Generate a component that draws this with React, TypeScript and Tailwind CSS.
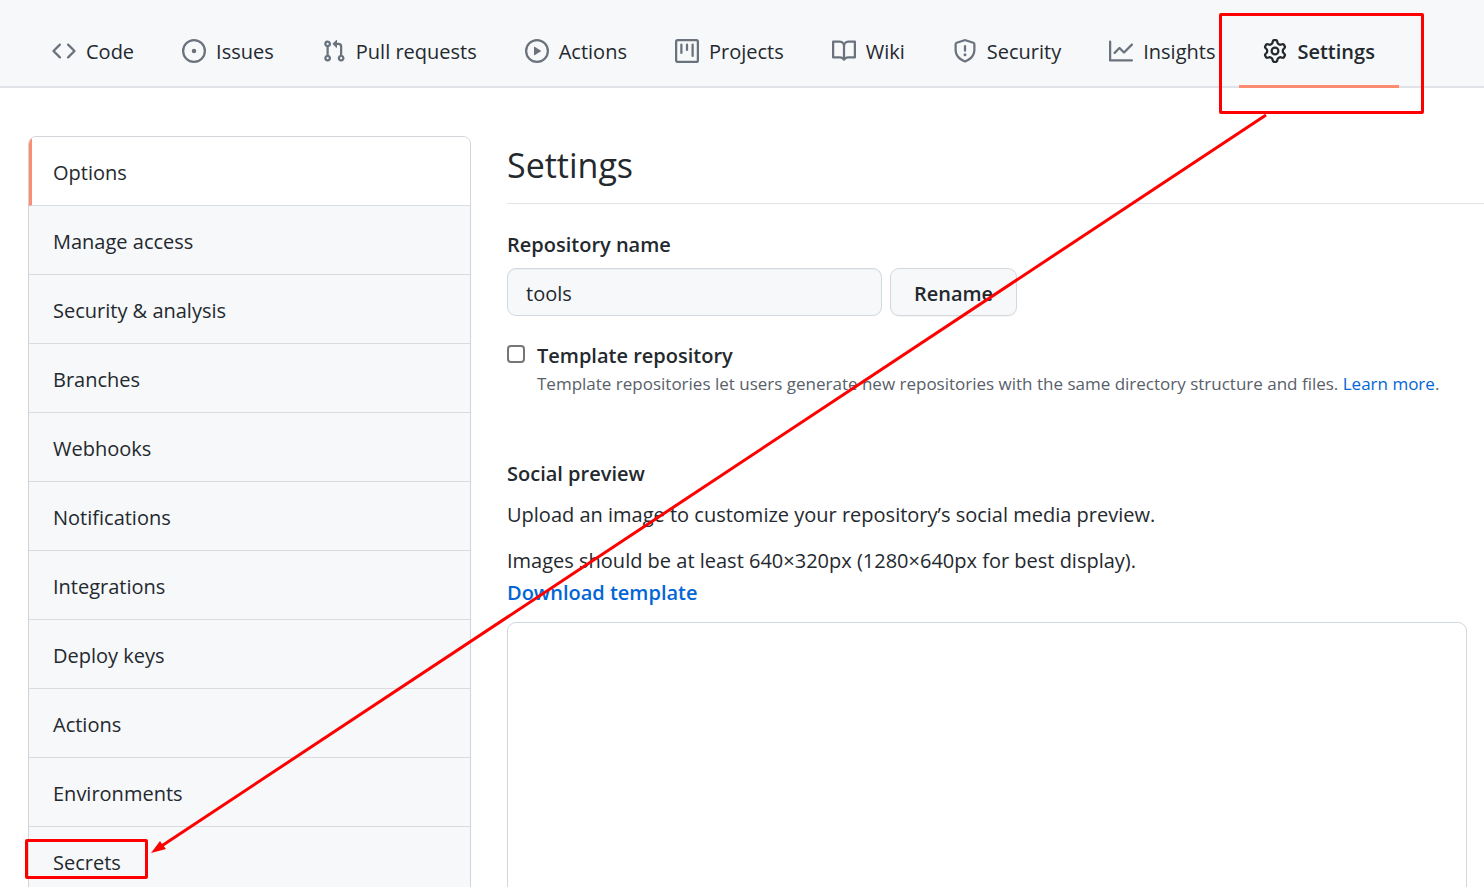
import React from "react";

type Tab = { label: string; path: string; active?: boolean };

const tabs: Tab[] = [
  {
    label: "Code",
    path: "M4.72 3.22a.75.75 0 011.06 1.06L2.06 8l3.72 3.72a.75.75 0 11-1.06 1.06L.47 8.53a.75.75 0 010-1.06l4.25-4.25zm6.56 0a.75.75 0 10-1.06 1.06L13.94 8l-3.72 3.72a.75.75 0 101.06 1.06l4.25-4.25a.75.75 0 000-1.06l-4.25-4.25z",
  },
  {
    label: "Issues",
    path: "M8 9.5a1.5 1.5 0 100-3 1.5 1.5 0 000 3zM8 0a8 8 0 100 16A8 8 0 008 0zM1.5 8a6.5 6.5 0 1113 0 6.5 6.5 0 01-13 0z",
  },
  {
    label: "Pull requests",
    path: "M7.177 3.073L9.573.677A.25.25 0 0110 .854v4.792a.25.25 0 01-.427.177L7.177 3.427a.25.25 0 010-.354zM3.75 2.5a.75.75 0 100 1.5.75.75 0 000-1.5zm-2.25.75a2.25 2.25 0 113 2.122v5.256a2.251 2.251 0 11-1.5 0V5.372A2.25 2.25 0 011.5 3.25zM11 2.5h-1V4h1a1 1 0 011 1v5.628a2.251 2.251 0 101.5 0V5A2.5 2.5 0 0011 2.5zm1 10.25a.75.75 0 111.5 0 .75.75 0 01-1.5 0zM3.75 12a.75.75 0 100 1.5.75.75 0 000-1.5z",
  },
  {
    label: "Actions",
    path: "M1.5 8a6.5 6.5 0 1113 0 6.5 6.5 0 01-13 0zM8 0a8 8 0 100 16A8 8 0 008 0zM6.379 5.227A.25.25 0 006 5.442v5.117a.25.25 0 00.379.214l4.264-2.559a.25.25 0 000-.428L6.379 5.227z",
  },
  {
    label: "Projects",
    path: "M1.75 0A1.75 1.75 0 000 1.75v12.5C0 15.216.784 16 1.75 16h12.5A1.75 1.75 0 0016 14.25V1.75A1.75 1.75 0 0014.25 0H1.75zM1.5 1.75a.25.25 0 01.25-.25h12.5a.25.25 0 01.25.25v12.5a.25.25 0 01-.25.25H1.75a.25.25 0 01-.25-.25V1.75zM11.75 3a.75.75 0 00-.75.75v7.5a.75.75 0 001.5 0v-7.5a.75.75 0 00-.75-.75zm-8.25.75a.75.75 0 011.5 0v5.5a.75.75 0 01-1.5 0v-5.5zM8 3a.75.75 0 00-.75.75v3.5a.75.75 0 001.5 0v-3.5A.75.75 0 008 3z",
  },
  {
    label: "Wiki",
    path: "M0 1.75A.75.75 0 01.75 1h4.253c1.227 0 2.317.59 3 1.501A3.744 3.744 0 0111.006 1h4.245a.75.75 0 01.75.75v10.5a.75.75 0 01-.75.75h-4.507a2.25 2.25 0 00-1.591.659l-.622.621a.75.75 0 01-1.06 0l-.622-.621A2.25 2.25 0 005.258 13H.75a.75.75 0 01-.75-.75V1.75zm8.755 3a2.25 2.25 0 012.25-2.25H14.5v9h-3.757c-.71 0-1.4.201-1.992.572l.004-7.322zm-1.504 7.324l.004-5.073-.002-2.253A2.25 2.25 0 005.003 2.5H1.5v9h3.757a3.75 3.75 0 011.994.574z",
  },
  {
    label: "Security",
    path: "M7.467.133a1.75 1.75 0 011.066 0l5.25 1.68A1.75 1.75 0 0115 3.48V7c0 1.566-.32 3.182-1.303 4.682-.983 1.498-2.585 2.813-5.032 3.855a1.7 1.7 0 01-1.33 0c-2.447-1.042-4.049-2.357-5.032-3.855C1.32 10.182 1 8.566 1 7V3.48a1.75 1.75 0 011.217-1.667l5.25-1.68zm.61 1.429a.25.25 0 00-.153 0l-5.25 1.68a.25.25 0 00-.174.238V7c0 1.358.275 2.666 1.057 3.86.784 1.194 2.121 2.34 4.366 3.297a.2.2 0 00.154 0c2.245-.956 3.582-2.104 4.366-3.298C13.225 9.666 13.5 8.36 13.5 7V3.48a.25.25 0 00-.174-.237l-5.25-1.68zM9 10.5a1 1 0 11-2 0 1 1 0 012 0zm-.25-5.75a.75.75 0 10-1.5 0v3a.75.75 0 001.5 0v-3z",
  },
  {
    label: "Insights",
    path: "M1.5 1.75a.75.75 0 00-1.5 0v12.5c0 .414.336.75.75.75h14.5a.75.75 0 000-1.5H1.5V1.75zm14.28 2.53a.75.75 0 00-1.06-1.06L10 7.94 7.53 5.47a.75.75 0 00-1.06 0L3.22 8.72a.75.75 0 001.06 1.06L7 7.06l2.47 2.47a.75.75 0 001.06 0l5.25-5.25z",
  },
  {
    label: "Settings",
    active: true,
    path: "M7.429 1.525a6.593 6.593 0 011.142 0c.036.003.108.036.137.146l.289 1.105c.147.56.55.967.997 1.189.174.086.341.183.501.29.417.278.97.423 1.53.27l1.102-.303c.11-.03.175.016.195.046.219.31.41.641.573.989.014.031.022.11-.059.19l-.815.806c-.411.406-.562.957-.53 1.456a4.588 4.588 0 010 .582c-.032.499.119 1.05.53 1.456l.815.806c.08.08.073.159.059.19a6.494 6.494 0 01-.573.99c-.02.029-.086.074-.195.045l-1.103-.303c-.559-.153-1.112-.008-1.529.27-.16.107-.327.204-.5.29-.449.222-.851.628-.998 1.189l-.289 1.105c-.029.11-.101.143-.137.146a6.613 6.613 0 01-1.142 0c-.036-.003-.108-.037-.137-.146l-.289-1.105c-.147-.56-.55-.967-.997-1.189a4.502 4.502 0 01-.501-.29c-.417-.278-.97-.423-1.53-.27l-1.102.303c-.11.03-.175-.016-.195-.046a6.492 6.492 0 01-.573-.989c-.014-.031-.022-.11.059-.19l.815-.806c.411-.406.562-.957.53-1.456a4.587 4.587 0 010-.582c.032-.499-.119-1.05-.53-1.456l-.815-.806c-.08-.08-.073-.159-.059-.19a6.44 6.44 0 01.573-.99c.02-.029.086-.075.195-.045l1.103.303c.559.153 1.112.008 1.529-.27.16-.107.327-.204.5-.29.449-.222.851-.628.998-1.189l.289-1.105c.029-.11.101-.143.137-.146zM8 0c-.236 0-.47.01-.701.03-.743.065-1.29.615-1.458 1.261l-.29 1.106c-.017.066-.078.158-.211.224a5.994 5.994 0 00-.668.386c-.123.082-.233.09-.3.071L3.27 2.776c-.644-.177-1.392.02-1.82.63a7.977 7.977 0 00-.704 1.217c-.315.675-.111 1.422.363 1.891l.815.806c.05.048.098.147.088.294a6.084 6.084 0 000 .772c.01.147-.038.246-.088.294l-.815.806c-.474.469-.678 1.216-.363 1.891.2.428.436.835.704 1.218.428.609 1.176.806 1.82.63l1.103-.303c.066-.019.176-.011.299.071.213.143.436.272.668.386.133.066.194.158.212.224l.289 1.106c.169.646.715 1.196 1.458 1.26a8.094 8.094 0 001.402 0c.743-.064 1.29-.614 1.458-1.26l.29-1.106c.017-.066.078-.158.211-.224a5.98 5.98 0 00.668-.386c.123-.082.233-.09.3-.071l1.102.302c.644.177 1.392-.02 1.82-.63.268-.382.505-.789.704-1.217.315-.675.111-1.422-.364-1.891l-.814-.806c-.05-.048-.098-.147-.088-.294a6.1 6.1 0 000-.772c-.01-.147.039-.246.088-.294l.814-.806c.475-.469.679-1.216.364-1.891a7.992 7.992 0 00-.704-1.218c-.428-.609-1.176-.806-1.82-.63l-1.103.303c-.066.019-.176.011-.299-.071a5.991 5.991 0 00-.668-.386c-.133-.066-.194-.158-.212-.224L10.16 1.29C9.99.645 9.444.095 8.701.031A8.094 8.094 0 008 0zm1.5 8a1.5 1.5 0 11-3 0 1.5 1.5 0 013 0zM11 8a3 3 0 11-6 0 3 3 0 016 0z",
  },
];

const menu = [
  "Options",
  "Manage access",
  "Security & analysis",
  "Branches",
  "Webhooks",
  "Notifications",
  "Integrations",
  "Deploy keys",
  "Actions",
  "Environments",
  "Secrets",
];

function TabBar() {
  return (
    <nav aria-label="Repository" className="flex border-b-2 border-[#dfe3e8] bg-[#f6f8fa] pl-7">
      {tabs.map((tab) => (
        <a
          key={tab.label}
          href="#"
          className={
            tab.active
              ? "-mb-0.5 flex h-[88px] items-center gap-[10px] whitespace-nowrap border-b-3 border-[#fd8c73] px-6 pt-[17px] font-semibold"
              : "-mb-0.5 flex h-[88px] items-center gap-[10px] whitespace-nowrap border-b-3 border-transparent px-6 pt-[17px]"
          }
        >
          <svg
            viewBox="0 0 16 16"
            aria-hidden="true"
            fillRule="evenodd"
            className={tab.active ? "size-6 shrink-0 fill-[#24292e]" : "size-6 shrink-0 fill-[#6a737d]"}
          >
            <path d={tab.path} />
          </svg>
          <span className="pt-0.5">{tab.label}</span>
        </a>
      ))}
    </nav>
  );
}

function SideMenu() {
  return (
    <nav
      aria-label="Settings sections"
      className="w-[443px] shrink-0 self-start overflow-hidden rounded-t-lg border border-[#d1d5da] bg-[#f6f8fa]"
    >
      {menu.map((item, i) => (
        <a
          key={item}
          href="#"
          className={
            i === 0
              ? "flex h-[69px] items-center border-b border-l-3 border-b-[#d8dce1] border-l-[#fd8c73] bg-white pl-[21px] pt-1"
              : "flex h-[69px] items-center border-b border-[#d8dce1] pl-6 pt-1"
          }
        >
          {item}
        </a>
      ))}
    </nav>
  );
}

function SettingsForm() {
  return (
    <main className="min-w-0 flex-1">
      <h1 className="border-b border-[#dfe3e8] pb-[14px] pt-[5px] text-[34px] leading-12">Settings</h1>

      <label htmlFor="repo-name" className="mt-[25px] block font-semibold leading-8">
        Repository name
      </label>
      <div className="mt-[7px] flex gap-2">
        <input
          id="repo-name"
          type="text"
          defaultValue="tools"
          className="h-12 w-[375px] rounded-[9px] border border-[#d1d8e0] bg-[#f6f8fa] px-[18px] pt-0.5 shadow-[inset_0_1px_0_rgba(225,228,232,0.4)]"
        />
        <button
          type="button"
          className="h-12 w-[127px] rounded-[9px] border border-[#d5d8da] bg-[#f6f8fa] pt-1 font-semibold shadow-[0_1px_0_rgba(27,31,35,0.04)]"
        >
          Rename
        </button>
      </div>

      <div className="mt-6 flex gap-3">
        <input
          id="template"
          type="checkbox"
          className="mt-[5px] size-[18px] shrink-0 appearance-none rounded-[4px] border-2 border-[#767676] bg-white"
        />
        <div>
          <label htmlFor="template" className="block font-semibold leading-8">
            Template repository
          </label>
          <p className="whitespace-nowrap text-[17px] leading-6 text-[#586069]">
            Template repositories let users generate new repositories with the same directory structure and files.{" "}
            <a href="#" className="text-[#0366d6]">
              Learn more
            </a>
            .
          </p>
        </div>
      </div>

      <h2 className="mt-[62px] font-semibold leading-8">Social preview</h2>
      <p className="mt-[9px] leading-8">Upload an image to customize your repository’s social media preview.</p>
      <p className="mt-[14px] leading-8">
        Images should be at least 640×320px (1280×640px for best display).
        <br />
        <a href="#" className="font-semibold text-[#0366d6]">
          Download template
        </a>
      </p>
      <div className="mr-[17px] mt-[13px] h-[480px] rounded-[9px] border border-[#d1d8e0]" />
    </main>
  );
}

function Annotations() {
  return (
    <div aria-hidden="true" className="pointer-events-none absolute inset-0">
      <div className="absolute left-[1219px] top-[13px] h-[101px] w-[205px] rounded-[2px] border-3 border-[#ff0000]" />
      <div className="absolute left-[25px] top-[839px] h-10 w-[123px] rounded-[2px] border-3 border-[#ff0000]" />
      <svg className="absolute inset-0 size-full">
        <line x1="1266" y1="115" x2="160" y2="847" stroke="#ff0000" strokeWidth="3" />
        <polygon points="151,853 160,841 162,844 166,849" fill="#ff0000" />
      </svg>
    </div>
  );
}

export default function App() {
  return (
    <div className="relative h-screen overflow-hidden bg-white font-['Open_Sans','Noto_Sans',sans-serif] text-[20px] leading-8 text-[#24292e]">
      <TabBar />
      <div className="flex gap-9 pl-7 pt-12">
        <SideMenu />
        <SettingsForm />
      </div>
      <Annotations />
    </div>
  );
}
